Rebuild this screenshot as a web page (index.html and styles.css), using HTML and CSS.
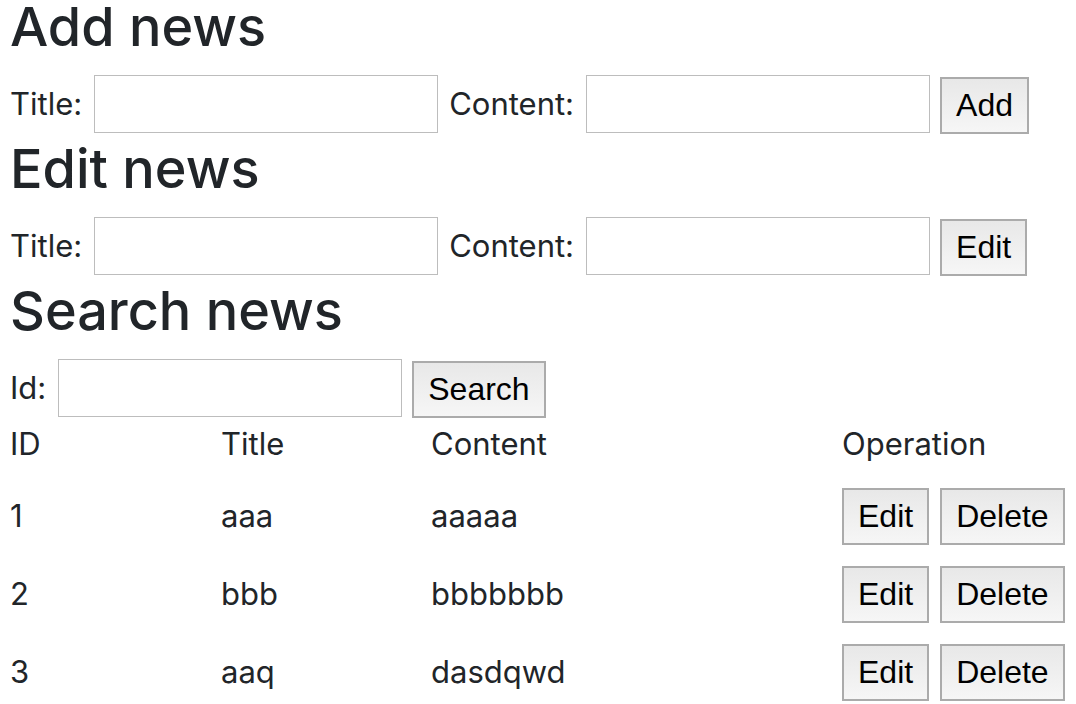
FILE: index.html
```html
<!DOCTYPE html>
<html>
<head>
<meta charset="utf-8">
<title>News</title>
<link rel="stylesheet" href="styles.css">
</head>
<body>
<section class="block">
  <h3 class="heading">Add news</h3>
  <div class="form-row">
    <label class="label">Title:</label>
    <input class="field" type="text">
    <label class="label">Content:</label>
    <input class="field" type="text">
    <button class="btn">Add</button>
  </div>
</section>
<section class="block">
  <h3 class="heading">Edit news</h3>
  <div class="form-row">
    <label class="label">Title:</label>
    <input class="field" type="text">
    <label class="label">Content:</label>
    <input class="field" type="text">
    <button class="btn">Edit</button>
  </div>
</section>
<section class="block">
  <h3 class="heading">Search news</h3>
  <div class="form-row">
    <label class="label">Id:</label>
    <input class="field" type="text">
    <button class="btn">Search</button>
  </div>
</section>
<div class="table">
  <div class="thead">
    <div class="cell">ID</div>
    <div class="cell">Title</div>
    <div class="cell">Content</div>
    <div class="cell">Operation</div>
  </div>
  <div class="trow">
    <div class="cell">1</div>
    <div class="cell">aaa</div>
    <div class="cell">aaaaa</div>
    <div class="cell ops"><button class="btn">Edit</button><button class="btn">Delete</button></div>
  </div>
  <div class="trow">
    <div class="cell">2</div>
    <div class="cell">bbb</div>
    <div class="cell">bbbbbbb</div>
    <div class="cell ops"><button class="btn">Edit</button><button class="btn">Delete</button></div>
  </div>
  <div class="trow">
    <div class="cell">3</div>
    <div class="cell">aaq</div>
    <div class="cell">dasdqwd</div>
    <div class="cell ops"><button class="btn">Edit</button><button class="btn">Delete</button></div>
  </div>
</div>
</body>
</html>
```
FILE: styles.css
```css
html, body {
  margin: 0;
  padding: 0;
  background: #ffffff;
}
body {
  padding-left: 10px;
  font-family: Inter, "Noto Sans", sans-serif;
  font-size: 31px;
  line-height: 40px;
  color: #212529;
}
.block {
  margin: 0;
}
.heading {
  margin: 0;
  font-size: 54px;
  line-height: 54px;
  font-weight: 500;
  color: #212529;
}
.form-row {
  display: flex;
  align-items: center;
  gap: 11.5px;
  margin-top: 21px;
  margin-bottom: 9px;
  height: 58px;
}
.label {
  white-space: nowrap;
}
.field {
  box-sizing: border-box;
  width: 344px;
  height: 58px;
  margin: 0;
  border: 1px solid #bdbdbd;
  background: #fff;
  font: inherit;
  padding: 0 6px;
  outline: none;
}
.btn {
  box-sizing: border-box;
  height: 57px;
  margin: 0;
  padding: 8px 14px;
  border: 2px solid #ababab;
  border-radius: 0;
  background: linear-gradient(#e8e8e8, #f6f6f6);
  font-family: "Liberation Sans", Arial, sans-serif;
  font-size: 32px;
  line-height: 37px;
  color: #000;
}
.form-row .btn {
  margin-left: -1px;
  align-self: flex-end;
  margin-bottom: -1px;
}
.table {
  margin-top: -9px;
}
.thead, .trow {
  display: grid;
  grid-template-columns: 211px 210px 411px auto;
}
.thead {
  height: 60px;
  padding-top: 7px;
  box-sizing: border-box;
}
.trow {
  height: 78px;
  align-items: center;
}
.ops {
  display: flex;
  gap: 11px;
}
```
